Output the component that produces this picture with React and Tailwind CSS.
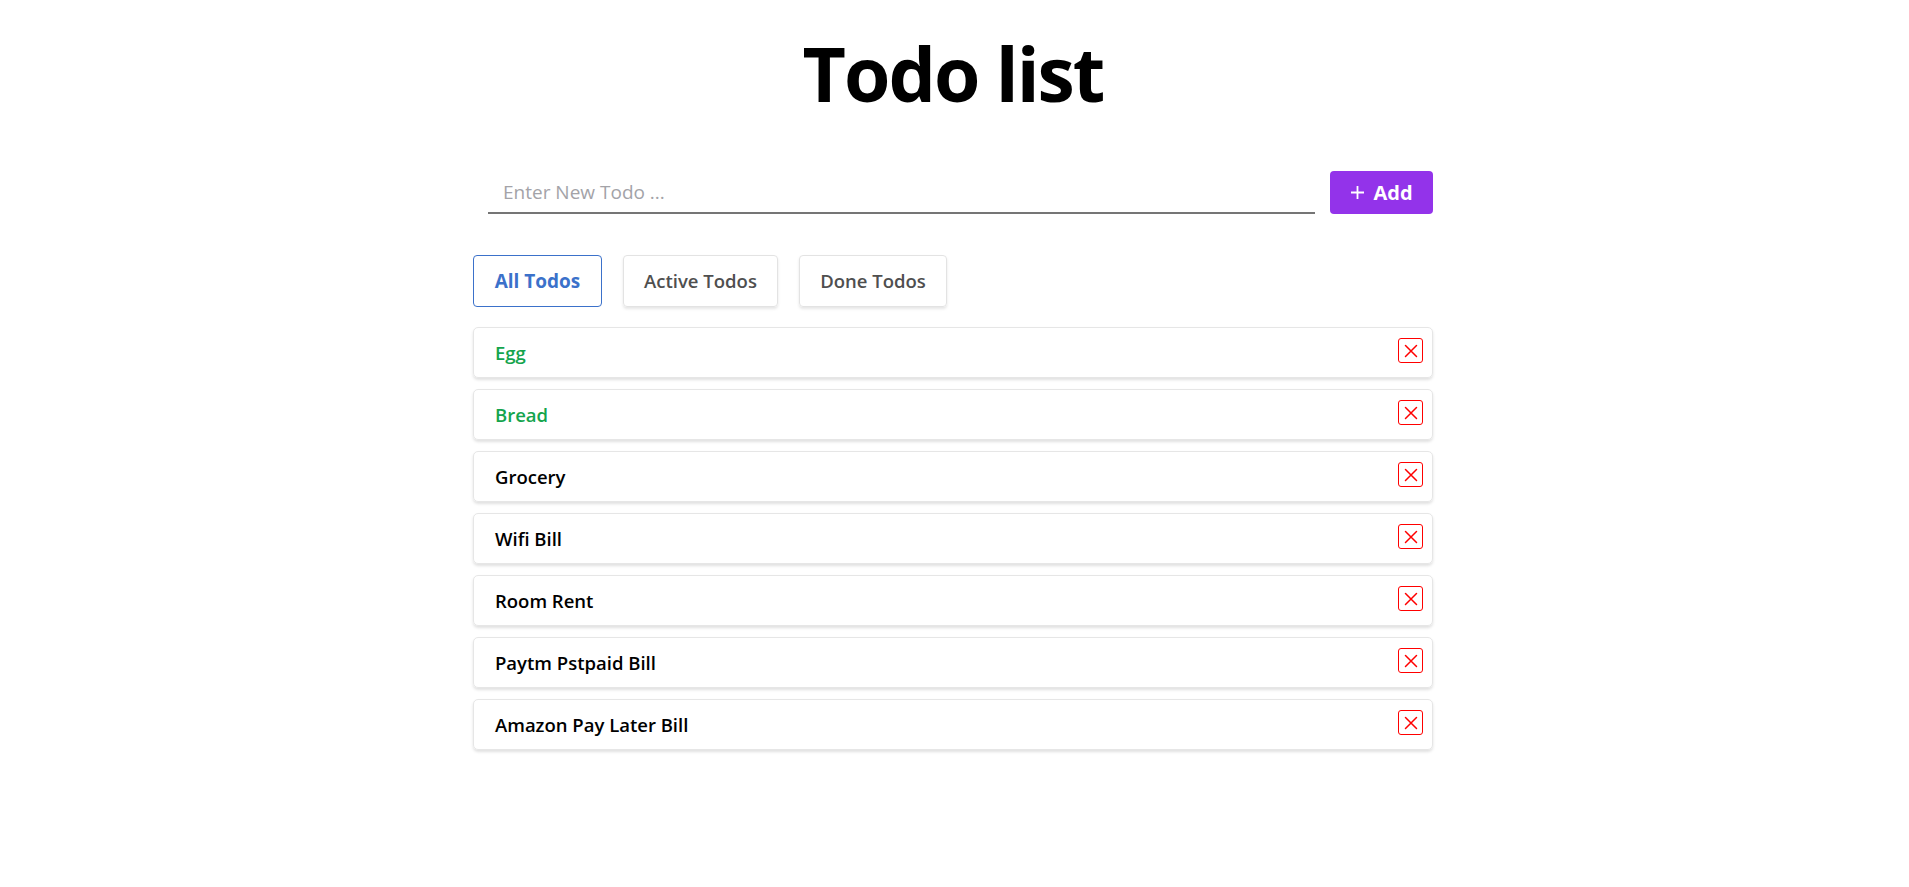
import React from "react";

const todos = [
  { text: "Egg", done: true },
  { text: "Bread", done: true },
  { text: "Grocery", done: false },
  { text: "Wifi Bill", done: false },
  { text: "Room Rent", done: false },
  { text: "Paytm Pstpaid Bill", done: false },
  { text: "Amazon Pay Later Bill", done: false },
];

function XBox() {
  return (
    <div className="w-[25px] h-[25px] border-[1.5px] border-[#ff0000] rounded-[3px] flex items-center justify-center shrink-0">
      <svg width="14" height="14" viewBox="0 0 14 14" fill="none">
        <path d="M1.5 1.5 L12.5 12.5 M12.5 1.5 L1.5 12.5" stroke="#ff0000" strokeWidth="1.5" strokeLinecap="round" />
      </svg>
    </div>
  );
}

export default function App() {
  return (
    <div className="w-full min-h-[887px] bg-white text-black flex justify-center pr-[3px]" style={{ fontFamily: '"Open Sans", "Noto Sans", sans-serif' }}>
      <div className="w-[960px] flex flex-col">
        <h1 className="pt-[36px] text-center text-[75px] leading-none font-bold tracking-[-2px]">Todo list</h1>

        <div className="mt-[60px] flex items-stretch gap-[15px] pl-[15px]">
          <input
            className="flex-1 h-[43px] border-b-2 border-[#757575] outline-none px-[15px] text-[19px] placeholder:text-[#a3a3a8]"
            placeholder="Enter New Todo ..."
          />
          <button className="w-[103px] h-[43px] rounded-[4px] bg-[#9333ea] text-white flex items-center justify-center gap-[8px] text-[20px] font-bold">
            <svg width="15" height="15" viewBox="0 0 15 15" fill="none">
              <path d="M7.5 1 V14 M1 7.5 H14" stroke="white" strokeWidth="1.8" />
            </svg>
            <span>Add</span>
          </button>
        </div>

        <div className="mt-[41px] flex gap-[21px]">
          <button className="w-[129px] h-[52px] rounded-[4px] border border-[#3b71ca] text-[#3b71ca] text-[19px] font-bold">
            All Todos
          </button>
          <button className="w-[155px] h-[52px] rounded-[4px] border border-[#e3e3e3] shadow-[0_2px_3px_rgba(0,0,0,0.1)] text-[#4f4f4f] text-[18.5px] font-semibold">
            Active Todos
          </button>
          <button className="w-[148px] h-[52px] rounded-[4px] border border-[#e3e3e3] shadow-[0_2px_3px_rgba(0,0,0,0.1)] text-[#4f4f4f] text-[18.5px] font-semibold">
            Done Todos
          </button>
        </div>

        <div className="mt-[20px] flex flex-col gap-[11px]">
          {todos.map((t) => (
            <div
              key={t.text}
              className="h-[51px] rounded-[5px] border border-[#e6e6e6] shadow-[0_2px_3px_rgba(0,0,0,0.12)] flex items-start justify-between pl-[21px] pr-[9px] pt-[10px]"
            >
              <span className={`self-center -mt-[10px] text-[18.5px] font-semibold ${t.done ? "text-[#14a44d]" : "text-black"}`}>
                {t.text}
              </span>
              <XBox />
            </div>
          ))}
        </div>
      </div>
    </div>
  );
}
